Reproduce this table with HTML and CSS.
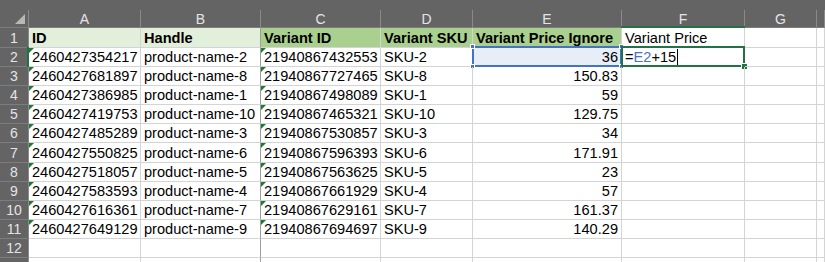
FILE: index.html
```html
<!DOCTYPE html>
<html>
<head>
<meta charset="utf-8">
<link rel="stylesheet" href="styles.css">
</head>
<body>
<div class="band"></div>
<div class="sheet">
  <div class="h corner"></div>
  <div class="h col">A</div><div class="h col">B</div><div class="h col">C</div><div class="h col">D</div><div class="h col">E</div><div class="h col colsel">F</div><div class="h col">G</div><div class="h col"></div>

  <div class="h row">1</div>
  <div class="c b lg">ID</div><div class="c b lg sep">Handle</div><div class="c b dg">Variant ID</div><div class="c b dg">Variant SKU</div><div class="c b dg">Variant Price Ignore</div><div class="c">Variant Price</div><div class="c"></div><div class="c"></div>

  <div class="h row rowsel">2</div>
  <div class="c t">2460427354217</div><div class="c sep">product-name-2</div><div class="c t">21940867432553</div><div class="c">SKU-2</div><div class="c r ref">36<span class="refbox"><i class="k tl"></i><i class="k tr"></i><i class="k bl"></i><i class="k br"></i></span></div><div class="c edit">=<span class="blue">E2</span>+15<span class="caret"></span><span class="actbox"><i class="fill"></i></span></div><div class="c"></div><div class="c"></div>

  <div class="h row">3</div>
  <div class="c t">2460427681897</div><div class="c sep">product-name-8</div><div class="c t">21940867727465</div><div class="c">SKU-8</div><div class="c r">150.83</div><div class="c"></div><div class="c"></div><div class="c"></div>

  <div class="h row">4</div>
  <div class="c t">2460427386985</div><div class="c sep">product-name-1</div><div class="c t">21940867498089</div><div class="c">SKU-1</div><div class="c r">59</div><div class="c"></div><div class="c"></div><div class="c"></div>

  <div class="h row">5</div>
  <div class="c t">2460427419753</div><div class="c sep">product-name-10</div><div class="c t">21940867465321</div><div class="c">SKU-10</div><div class="c r">129.75</div><div class="c"></div><div class="c"></div><div class="c"></div>

  <div class="h row">6</div>
  <div class="c t">2460427485289</div><div class="c sep">product-name-3</div><div class="c t">21940867530857</div><div class="c">SKU-3</div><div class="c r">34</div><div class="c"></div><div class="c"></div><div class="c"></div>

  <div class="h row">7</div>
  <div class="c t">2460427550825</div><div class="c sep">product-name-6</div><div class="c t">21940867596393</div><div class="c">SKU-6</div><div class="c r">171.91</div><div class="c"></div><div class="c"></div><div class="c"></div>

  <div class="h row">8</div>
  <div class="c t">2460427518057</div><div class="c sep">product-name-5</div><div class="c t">21940867563625</div><div class="c">SKU-5</div><div class="c r">23</div><div class="c"></div><div class="c"></div><div class="c"></div>

  <div class="h row">9</div>
  <div class="c t">2460427583593</div><div class="c sep">product-name-4</div><div class="c t">21940867661929</div><div class="c">SKU-4</div><div class="c r">57</div><div class="c"></div><div class="c"></div><div class="c"></div>

  <div class="h row">10</div>
  <div class="c t">2460427616361</div><div class="c sep">product-name-7</div><div class="c t">21940867629161</div><div class="c">SKU-7</div><div class="c r">161.37</div><div class="c"></div><div class="c"></div><div class="c"></div>

  <div class="h row">11</div>
  <div class="c t">2460427649129</div><div class="c sep">product-name-9</div><div class="c t">21940867694697</div><div class="c">SKU-9</div><div class="c r">140.29</div><div class="c"></div><div class="c"></div><div class="c"></div>

  <div class="h row">12</div>
  <div class="c"></div><div class="c sep"></div><div class="c"></div><div class="c"></div><div class="c"></div><div class="c"></div><div class="c"></div><div class="c"></div>

  <div class="h row">13</div>
  <div class="c"></div><div class="c sep"></div><div class="c"></div><div class="c"></div><div class="c"></div><div class="c"></div><div class="c"></div><div class="c"></div>
</div>
</body>
</html>
```
FILE: styles.css
```css
html, body {
  margin: 0;
  padding: 0;
  background: #ffffff;
  overflow: hidden;
  height: 262px;
}

.band {
  height: 10px;
  background: #646464;
}

.sheet {
  display: grid;
  grid-template-columns: 29px 112px 120px 120px 92px 149px 123px 72px 1fr;
  grid-template-rows: 18px 20px 19px 19px 19px 19px 19px 20px 19px 19px 19px 19px 19px 19px;
  font-family: "Liberation Sans", Arial, sans-serif;
  font-size: 14.6px;
  color: #000;
}

.h {
  background: #646464;
  border-right: 1px solid #8a8a8a;
  border-bottom: 1px solid #7d7d7d;
  box-sizing: border-box;
  color: #e4e4e4;
  font-size: 14px;
  display: flex;
  align-items: center;
  justify-content: center;
  position: relative;
}

.h.row {
  align-items: flex-end;
  line-height: 17px;
}

.corner::after {
  content: "";
  position: absolute;
  right: 3px;
  bottom: 3px;
  width: 0;
  height: 0;
  border-left: 10px solid transparent;
  border-bottom: 10px solid #b8b8b8;
}

.colsel::after {
  content: "";
  position: absolute;
  left: -1px;
  right: -1px;
  bottom: -1px;
  height: 2px;
  background: #217346;
}

.rowsel::after {
  content: "";
  position: absolute;
  top: -1px;
  bottom: -1px;
  right: -1px;
  width: 2px;
  background: #217346;
}

.c {
  box-sizing: border-box;
  border-right: 1px solid #d4d4d4;
  border-bottom: 1px solid #d4d4d4;
  padding: 0 3px;
  display: flex;
  align-items: flex-end;
  white-space: nowrap;
  position: relative;
  line-height: 17px;
}

.c.sep {
  border-right-color: #9e9e9e;
}

.b { font-weight: bold; }
.lg { background: #e2efda; }
.dg { background: #a9d08e; }
.r { justify-content: flex-end; }

.t::before {
  content: "";
  position: absolute;
  top: 0;
  left: 0;
  width: 0;
  height: 0;
  border-top: 5px solid #1e7a36;
  border-right: 5px solid transparent;
}

.ref { background: #e8eef8; }

.refbox {
  position: absolute;
  left: -1px;
  top: -2px;
  right: -1px;
  bottom: -1px;
  border: 2px solid #4472c4;
}

.k {
  position: absolute;
  width: 5px;
  height: 5px;
  background: #4472c4;
  box-sizing: border-box;
  border: 1px solid #fff;
}
.k.tl { left: -4px; top: -4px; }
.k.tr { right: -4px; top: -4px; }
.k.bl { left: -4px; bottom: -4px; }
.k.br { right: -4px; bottom: -4px; }

.blue { color: #4472c4; }

.caret {
  display: inline-block;
  width: 1px;
  height: 16px;
  background: #000;
  margin-left: 1px;
  margin-bottom: 1px;
}

.actbox {
  position: absolute;
  left: -1px;
  top: -2px;
  right: -1px;
  bottom: -1px;
  border: 2px solid #217346;
}

.fill {
  position: absolute;
  right: -5px;
  bottom: -5px;
  width: 7px;
  height: 7px;
  background: #217346;
  border: 1px solid #fff;
  box-sizing: border-box;
}
```
